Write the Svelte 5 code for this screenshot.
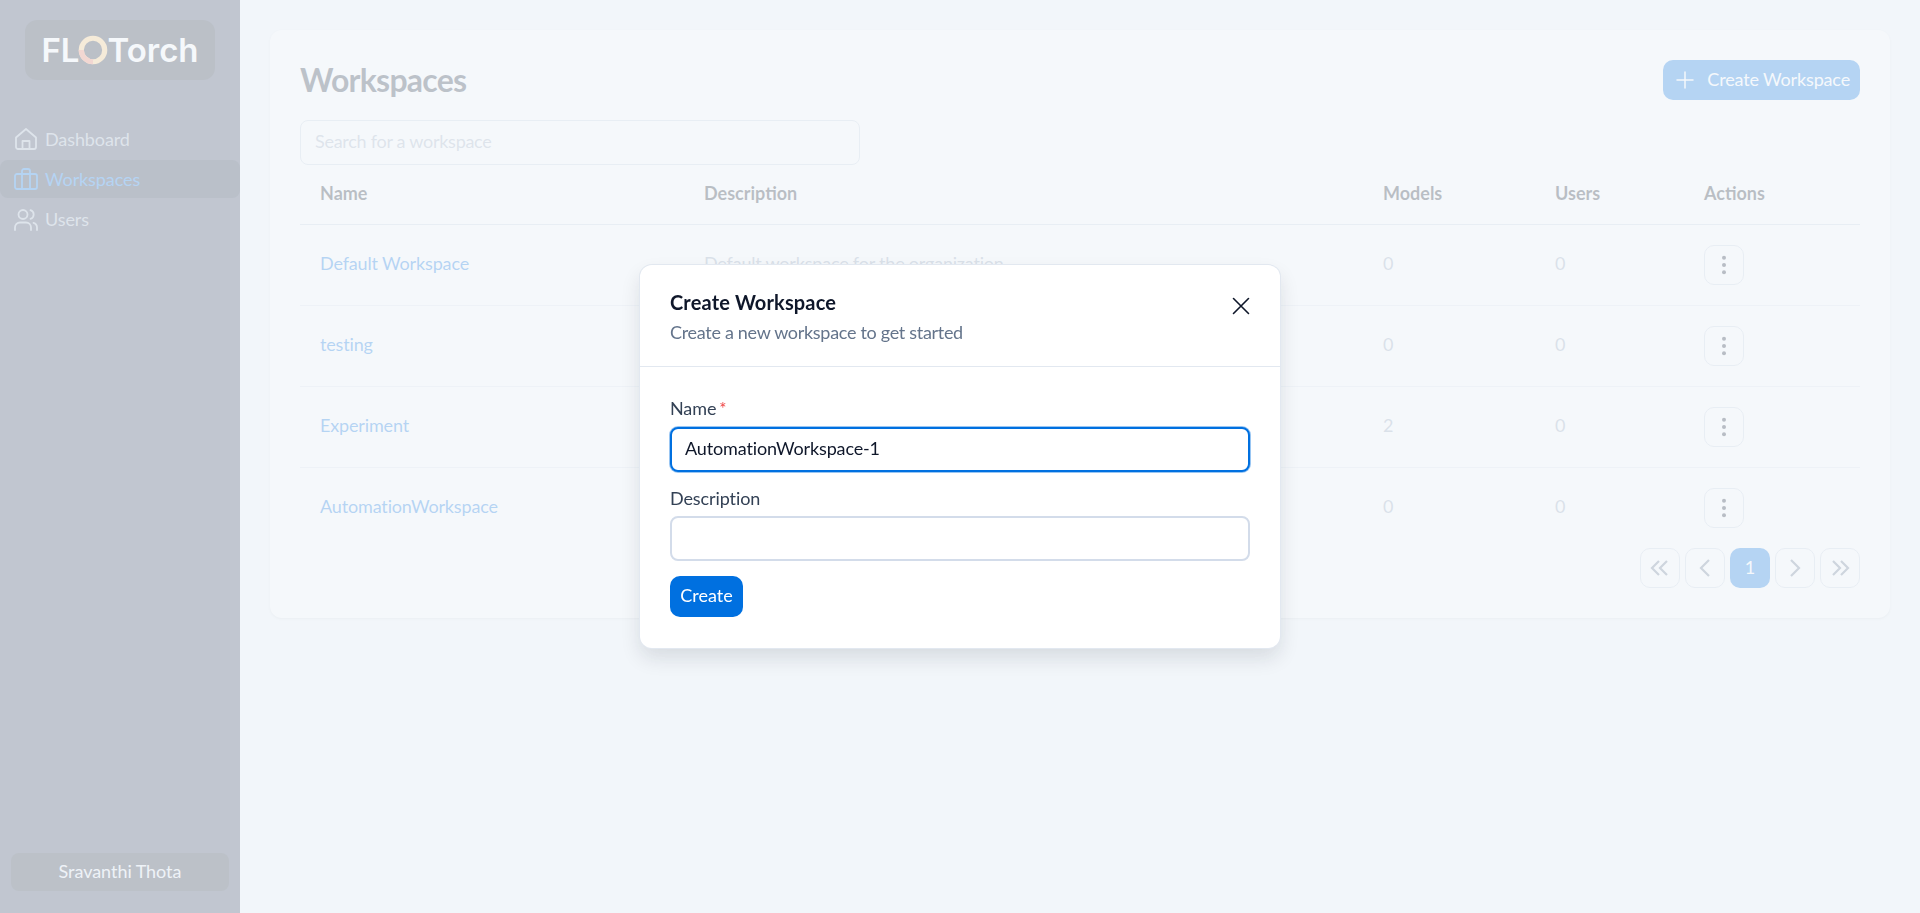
<script>
  const nav = [
    { label: 'Dashboard', icon: 'home' },
    { label: 'Workspaces', icon: 'case', active: true },
    { label: 'Users', icon: 'users' }
  ];

  const rows = [
    { name: 'Default Workspace', description: 'Default workspace for the organization', models: 0, users: 0 },
    { name: 'testing', description: '', models: 0, users: 0 },
    { name: 'Experiment', description: '', models: 2, users: 0 },
    { name: 'AutomationWorkspace', description: '', models: 0, users: 0 }
  ];

  let name = 'AutomationWorkspace-1';
  let description = '';
</script>

<div class="page">
  <aside class="sidebar">
    <div class="logo">
      <span class="logo-text">FL</span>
      <svg class="logo-ring" viewBox="0 0 32 32" width="30" height="30" fill="none" aria-hidden="true">
        <circle cx="16" cy="16" r="12.5" stroke="#ffc978" stroke-width="5.5" />
        <path d="M3.5 16A12.5 12.5 0 0 0 16 28.5" stroke="#f47c5c" stroke-width="5.5" />
      </svg>
      <span class="logo-text">Torch</span>
    </div>

    <nav class="nav">
      {#each nav as item}
        <div class="nav-item" class:active={item.active}>
          <svg viewBox="0 0 24 24" width="24" height="24" fill="none" stroke="currentColor" stroke-width="1.8" stroke-linecap="round" stroke-linejoin="round" aria-hidden="true">
            {#if item.icon === 'home'}
              <path d="M2 10.5 12 2l10 8.5V20a2 2 0 0 1-2 2H4a2 2 0 0 1-2-2z" />
              <path d="M8.5 22v-8h7v8" />
            {:else if item.icon === 'case'}
              <rect x="1" y="7" width="22" height="15" rx="2" />
              <path d="M8 22V4a2 2 0 0 1 2-2h4a2 2 0 0 1 2 2V22" />
            {:else}
              <circle cx="9" cy="7.5" r="4.5" />
              <path d="M1 23v-2.5a5 5 0 0 1 5-5h6a5 5 0 0 1 5 5V23" />
              <path d="M16.5 3.2a4.5 4.5 0 0 1 0 8.600" />
              <path d="M23 23v-2.5a5 5 0 0 0-3.5-4.700" />
            {/if}
          </svg>
          <span class="nav-label">{item.label}</span>
        </div>
      {/each}
    </nav>

    <button class="user">Sravanthi Thota</button>
  </aside>

  <main class="main">
    <section class="card">
      <header class="card-head">
        <h1>Workspaces</h1>
        <button class="primary add">
          <svg viewBox="0 0 24 24" width="24" height="24" fill="none" stroke="currentColor" stroke-width="1.5" stroke-linecap="round" aria-hidden="true">
            <path d="M12 4v16M4 12h16" />
          </svg>
          <span>Create Workspace</span>
        </button>
      </header>

      <input class="search" placeholder="Search for a workspace" />

      <div class="table">
        <div class="tr th">
          <div>Name</div>
          <div>Description</div>
          <div>Models</div>
          <div>Users</div>
          <div>Actions</div>
        </div>
        {#each rows as row}
          <div class="tr">
            <div class="link">{row.name}</div>
            <div class="muted">{row.description}</div>
            <div class="muted">{row.models}</div>
            <div class="muted">{row.users}</div>
            <div class="actions">
              <button class="icon-btn" aria-label="Actions">
                <svg viewBox="0 0 24 24" width="24" height="24" fill="currentColor" aria-hidden="true">
                  <circle cx="12" cy="4.7" r="2" />
                  <circle cx="12" cy="12" r="2" />
                  <circle cx="12" cy="19.3" r="2" />
                </svg>
              </button>
            </div>
          </div>
        {/each}
      </div>

      <div class="pager">
        <button class="icon-btn soft" aria-label="First">
          <svg viewBox="0 0 24 24" width="24" height="24" fill="none" stroke="currentColor" stroke-width="2.2" aria-hidden="true"><path d="M11 5l-7 7 7 7M19 5l-7 7 7 7" /></svg>
        </button>
        <button class="icon-btn soft" aria-label="Previous">
          <svg viewBox="0 0 24 24" width="24" height="24" fill="none" stroke="currentColor" stroke-width="2.2" aria-hidden="true"><path d="M16 4l-8 8 8 8" /></svg>
        </button>
        <button class="page-num">1</button>
        <button class="icon-btn soft" aria-label="Next">
          <svg viewBox="0 0 24 24" width="24" height="24" fill="none" stroke="currentColor" stroke-width="2.2" aria-hidden="true"><path d="M8 4l8 8-8 8" /></svg>
        </button>
        <button class="icon-btn soft" aria-label="Last">
          <svg viewBox="0 0 24 24" width="24" height="24" fill="none" stroke="currentColor" stroke-width="2.2" aria-hidden="true"><path d="M5 5l7 7-7 7M13 5l7 7-7 7" /></svg>
        </button>
      </div>
    </section>
  </main>

  <div class="overlay">
    <div class="modal">
      <div class="modal-head">
        <div>
          <h2>Create Workspace</h2>
          <p>Create a new workspace to get started</p>
        </div>
        <button class="close" aria-label="Close">
          <svg viewBox="0 0 24 24" width="24" height="24" fill="none" stroke="#0f172a" stroke-width="1.6" stroke-linecap="round" aria-hidden="true">
            <path d="M4.5 4.5l15 15M19.5 4.5l-15 15" />
          </svg>
        </button>
      </div>
      <div class="modal-body">
        <label class="field">
          <span class="label">Name<em>*</em></span>
          <input class="focused" bind:value={name} />
        </label>
        <label class="field">
          <span class="label">Description</span>
          <input bind:value={description} />
        </label>
        <button class="primary submit">Create</button>
      </div>
    </div>
  </div>
</div>

<style>
  :global(body) {
    margin: 0;
    background: #f1f5f9;
  }

  .page {
    display: flex;
    height: 913px;
    overflow: hidden;
    background: #f1f5f9;
    color: #0f172a;
    font-family: Lato, "Liberation Sans", sans-serif;
    font-size: 18px;
  }

  button, input {
    font-family: inherit;
  }

  .sidebar {
    display: flex;
    flex-direction: column;
    flex: 0 0 240px;
    background: #303955;
  }

  .logo {
    display: flex;
    align-items: center;
    justify-content: center;
    height: 60px;
    margin: 20px 25px 0;
    border-radius: 12px;
    background: #1a2233;
  }
  .logo-text {
    color: #fff;
    font-family: Inter, Lato, sans-serif;
    font-size: 33px;
    font-weight: 600;
    line-height: 1;
  }
  .logo-ring {
    margin: 0 -1px;
  }

  .nav {
    display: flex;
    flex-direction: column;
    gap: 2px;
    margin-top: 40px;
  }
  .nav-item {
    display: flex;
    align-items: center;
    gap: 7px;
    height: 38px;
    padding-left: 14px;
    border-radius: 8px;
    color: #a3afc0;
  }
  .nav-label {
    letter-spacing: -0.1px;
  }
  .nav-item.active {
    background: #14213a;
    color: #0070e0;
  }

  .user {
    height: 38px;
    margin: auto 11px 22px;
    padding: 0 0 2px;
    border: 0;
    border-radius: 8px;
    background: #1e2536;
    color: #e2e8f0;
    font-size: 18px;
    letter-spacing: -0.05px;
  }

  .main {
    flex: 1;
    padding: 30px;
    min-width: 0;
  }

  .card {
    padding: 30px;
    border-radius: 12px;
    background: #fff;
    box-shadow: 0 1px 2px rgba(15, 23, 42, 0.12);
  }
  .card-head {
    display: flex;
    align-items: center;
    justify-content: space-between;
  }
  h1 {
    margin: 0;
    color: #1e293b;
    font-size: 32px;
    font-weight: 700;
    line-height: 40px;
    letter-spacing: -0.75px;
  }

  .primary {
    border: 0;
    border-radius: 10px;
    background: #0070e0;
    color: #fff;
    font-size: 18px;
  }
  .add {
    display: flex;
    align-items: center;
    gap: 10px;
    height: 40px;
    padding: 0 10px;
    letter-spacing: -0.15px;
  }
  .add span {
    padding-bottom: 2px;
  }

  .search {
    display: block;
    box-sizing: border-box;
    width: 560px;
    height: 45px;
    margin-top: 20px;
    padding: 0 14px 3px;
    border: 1px solid #cbd5e1;
    border-radius: 8px;
    background: #fff;
    font-size: 18px;
    letter-spacing: -0.27px;
  }
  .search::placeholder {
    color: #a3afc0;
    opacity: 1;
  }

  .tr {
    display: grid;
    grid-template-columns: 384px 679px 172px 149px 1fr;
    align-items: center;
    height: 81px;
    box-sizing: border-box;
    border-bottom: 1px solid #e2e8f0;
  }
  .tr:last-child {
    height: 80px;
    border-bottom: 0;
  }
  .tr > div {
    padding-left: 20px;
    padding-bottom: 5px;
  }
  .tr > .actions {
    padding-bottom: 0;
  }
  .tr.th > div {
    padding-bottom: 3px;
  }
  .th {
    height: 60px;
    color: #111827;
    font-weight: 700;
    border-bottom-color: #cbd5e1;
  }
  .link {
    color: #0070e0;
    letter-spacing: -0.15px;
  }
  .muted {
    color: #94a3b8;
    white-space: nowrap;
    letter-spacing: -0.2px;
  }

  .icon-btn {
    display: flex;
    align-items: center;
    justify-content: center;
    width: 40px;
    height: 40px;
    padding: 0;
    border: 1px solid #cbd5e1;
    border-radius: 10px;
    background: #fff;
    color: #0f172a;
  }
  .icon-btn.soft {
    color: #64748b;
  }

  .pager {
    display: flex;
    justify-content: flex-end;
    gap: 5px;
  }
  .page-num {
    width: 40px;
    height: 40px;
    padding: 0 0 2px;
    border: 0;
    border-radius: 10px;
    background: #0070e0;
    color: #fff;
    font-size: 18px;
  }

  .overlay {
    position: fixed;
    inset: 0;
    display: flex;
    align-items: center;
    justify-content: center;
    background: rgba(241, 245, 249, 0.75);
  }

  .modal {
    width: 640px;
    box-sizing: border-box;
    border-radius: 12px;
    background: #fff;
    box-shadow: 0 0 0 1px #e2e8f0, 0 10px 20px rgba(15, 23, 42, 0.12);
  }
  .modal-head {
    display: flex;
    align-items: flex-start;
    justify-content: space-between;
    height: 102px;
    box-sizing: border-box;
    padding: 24px 27px 0 30px;
    border-bottom: 1px solid #e2e8f0;
  }
  h2 {
    margin: 0;
    color: #0f172a;
    font-size: 20px;
    font-weight: 700;
    line-height: 26px;
    letter-spacing: 0.15px;
  }
  .modal-head p {
    margin: 5px 0 0;
    color: #64748b;
    font-size: 18px;
    line-height: 24px;
    letter-spacing: -0.3px;
  }
  .close {
    display: flex;
    margin-top: 5px;
    padding: 0;
    border: 0;
    background: none;
  }

  .modal-body {
    display: flex;
    flex-direction: column;
    align-items: flex-start;
    padding: 29px 30px 31px;
  }
  .field {
    display: block;
    width: 100%;
    margin-bottom: 14px;
  }
  .label {
    display: block;
    margin-bottom: 6px;
    color: #334155;
    font-size: 18px;
    line-height: 24px;
    letter-spacing: -0.1px;
  }
  .label em {
    margin-left: 3px;
    color: #ef4444;
    font-style: normal;
    font-size: 17px;
    vertical-align: 0;
  }
  .field input {
    display: block;
    box-sizing: border-box;
    width: 100%;
    height: 45px;
    padding: 0 13px 3px;
    border: 2px solid #d3dcea;
    border-radius: 8px;
    outline: 0;
    color: #0f172a;
    font-size: 18px;
    letter-spacing: -0.14px;
  }
  .field input.focused {
    border-color: #0070e0;
    box-shadow: 0 0 0 1px rgba(0, 112, 224, 0.4);
  }

  .submit {
    width: 73px;
    height: 41px;
    margin-top: 1px;
    padding: 0 0 3px;
  }
</style>
